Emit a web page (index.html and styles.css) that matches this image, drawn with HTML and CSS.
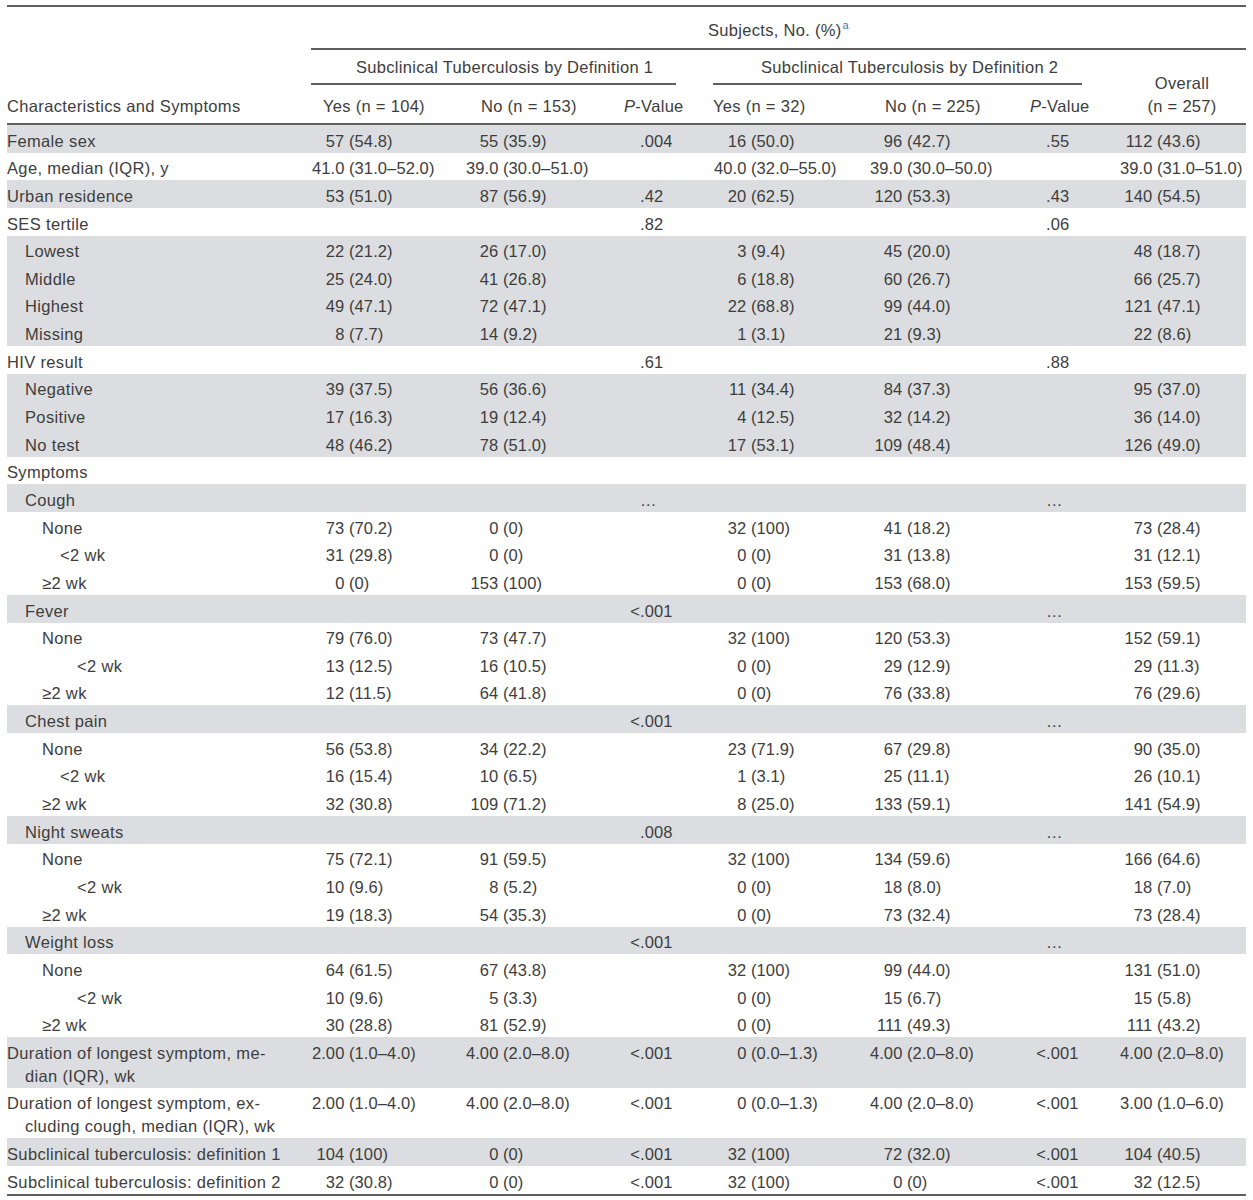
FILE: index.html
```html
<!DOCTYPE html>
<html lang="en">
<head>
<meta charset="utf-8">
<title>Table</title>
<link rel="stylesheet" href="styles.css">
</head>
<body>
<div class="wrap">
<table class="tbl">
<colgroup>
<col class="w0"><col class="w1"><col class="w2"><col class="w3"><col class="w4"><col class="w5"><col class="w6"><col class="w7">
</colgroup>
<thead>
<tr class="ha">
<td class="lab hlab" rowspan="3">Characteristics and Symptoms</td>
<td class="subj" colspan="7">Subjects, No. (%)<sup>a</sup></td>
</tr>
<tr class="hb">
<td class="def" colspan="3"><div class="def1">Subclinical Tuberculosis by Definition 1</div></td>
<td class="def" colspan="3"><div class="def2">Subclinical Tuberculosis by Definition 2</div></td>
<td class="ov" rowspan="2">Overall<br>(n = 257)</td>
</tr>
<tr class="hc">
<td class="h1">Yes (n = 104)</td>
<td class="h2">No (n = 153)</td>
<td class="h3"><i>P</i>-Value</td>
<td class="h4">Yes (n = 32)</td>
<td class="h5">No (n = 225)</td>
<td class="h6"><i>P</i>-Value</td>
</tr>
</thead>
<tbody>
<tr class="g"><td class="lab">Female sex</td><td class="c1"><span class="n">57</span>(54.8)</td><td class="c2"><span class="n">55</span>(35.9)</td><td class="c3"><span class="n"></span>.004</td><td class="c4"><span class="n">16</span>(50.0)</td><td class="c5"><span class="n">96</span>(42.7)</td><td class="c6"><span class="n"></span>.55</td><td class="c7"><span class="n">112</span>(43.6)</td></tr>
<tr><td class="lab">Age, median (IQR), y</td><td class="c1"><span class="n">41.0</span>(31.0–52.0)</td><td class="c2"><span class="n">39.0</span>(30.0–51.0)</td><td class="c3"></td><td class="c4"><span class="n">40.0</span>(32.0–55.0)</td><td class="c5"><span class="n">39.0</span>(30.0–50.0)</td><td class="c6"></td><td class="c7"><span class="n">39.0</span>(31.0–51.0)</td></tr>
<tr class="g"><td class="lab">Urban residence</td><td class="c1"><span class="n">53</span>(51.0)</td><td class="c2"><span class="n">87</span>(56.9)</td><td class="c3"><span class="n"></span>.42</td><td class="c4"><span class="n">20</span>(62.5)</td><td class="c5"><span class="n">120</span>(53.3)</td><td class="c6"><span class="n"></span>.43</td><td class="c7"><span class="n">140</span>(54.5)</td></tr>
<tr><td class="lab">SES tertile</td><td class="c1"></td><td class="c2"></td><td class="c3"><span class="n"></span>.82</td><td class="c4"></td><td class="c5"></td><td class="c6"><span class="n"></span>.06</td><td class="c7"></td></tr>
<tr class="g"><td class="lab l1">Lowest</td><td class="c1"><span class="n">22</span>(21.2)</td><td class="c2"><span class="n">26</span>(17.0)</td><td class="c3"></td><td class="c4"><span class="n">3</span>(9.4)</td><td class="c5"><span class="n">45</span>(20.0)</td><td class="c6"></td><td class="c7"><span class="n">48</span>(18.7)</td></tr>
<tr class="g"><td class="lab l1">Middle</td><td class="c1"><span class="n">25</span>(24.0)</td><td class="c2"><span class="n">41</span>(26.8)</td><td class="c3"></td><td class="c4"><span class="n">6</span>(18.8)</td><td class="c5"><span class="n">60</span>(26.7)</td><td class="c6"></td><td class="c7"><span class="n">66</span>(25.7)</td></tr>
<tr class="g"><td class="lab l1">Highest</td><td class="c1"><span class="n">49</span>(47.1)</td><td class="c2"><span class="n">72</span>(47.1)</td><td class="c3"></td><td class="c4"><span class="n">22</span>(68.8)</td><td class="c5"><span class="n">99</span>(44.0)</td><td class="c6"></td><td class="c7"><span class="n">121</span>(47.1)</td></tr>
<tr class="g"><td class="lab l1">Missing</td><td class="c1"><span class="n">8</span>(7.7)</td><td class="c2"><span class="n">14</span>(9.2)</td><td class="c3"></td><td class="c4"><span class="n">1</span>(3.1)</td><td class="c5"><span class="n">21</span>(9.3)</td><td class="c6"></td><td class="c7"><span class="n">22</span>(8.6)</td></tr>
<tr><td class="lab">HIV result</td><td class="c1"></td><td class="c2"></td><td class="c3"><span class="n"></span>.61</td><td class="c4"></td><td class="c5"></td><td class="c6"><span class="n"></span>.88</td><td class="c7"></td></tr>
<tr class="g"><td class="lab l1">Negative</td><td class="c1"><span class="n">39</span>(37.5)</td><td class="c2"><span class="n">56</span>(36.6)</td><td class="c3"></td><td class="c4"><span class="n">11</span>(34.4)</td><td class="c5"><span class="n">84</span>(37.3)</td><td class="c6"></td><td class="c7"><span class="n">95</span>(37.0)</td></tr>
<tr class="g"><td class="lab l1">Positive</td><td class="c1"><span class="n">17</span>(16.3)</td><td class="c2"><span class="n">19</span>(12.4)</td><td class="c3"></td><td class="c4"><span class="n">4</span>(12.5)</td><td class="c5"><span class="n">32</span>(14.2)</td><td class="c6"></td><td class="c7"><span class="n">36</span>(14.0)</td></tr>
<tr class="g"><td class="lab l1">No test</td><td class="c1"><span class="n">48</span>(46.2)</td><td class="c2"><span class="n">78</span>(51.0)</td><td class="c3"></td><td class="c4"><span class="n">17</span>(53.1)</td><td class="c5"><span class="n">109</span>(48.4)</td><td class="c6"></td><td class="c7"><span class="n">126</span>(49.0)</td></tr>
<tr><td class="lab">Symptoms</td><td class="c1"></td><td class="c2"></td><td class="c3"></td><td class="c4"></td><td class="c5"></td><td class="c6"></td><td class="c7"></td></tr>
<tr class="g"><td class="lab l1">Cough</td><td class="c1"></td><td class="c2"></td><td class="c3"><span class="n"></span>…</td><td class="c4"></td><td class="c5"></td><td class="c6"><span class="n"></span>…</td><td class="c7"></td></tr>
<tr><td class="lab l2">None</td><td class="c1"><span class="n">73</span>(70.2)</td><td class="c2"><span class="n">0</span>(0)</td><td class="c3"></td><td class="c4"><span class="n">32</span>(100)</td><td class="c5"><span class="n">41</span>(18.2)</td><td class="c6"></td><td class="c7"><span class="n">73</span>(28.4)</td></tr>
<tr><td class="lab l3">&lt;2 wk</td><td class="c1"><span class="n">31</span>(29.8)</td><td class="c2"><span class="n">0</span>(0)</td><td class="c3"></td><td class="c4"><span class="n">0</span>(0)</td><td class="c5"><span class="n">31</span>(13.8)</td><td class="c6"></td><td class="c7"><span class="n">31</span>(12.1)</td></tr>
<tr><td class="lab l2">≥2 wk</td><td class="c1"><span class="n">0</span>(0)</td><td class="c2"><span class="n">153</span>(100)</td><td class="c3"></td><td class="c4"><span class="n">0</span>(0)</td><td class="c5"><span class="n">153</span>(68.0)</td><td class="c6"></td><td class="c7"><span class="n">153</span>(59.5)</td></tr>
<tr class="g"><td class="lab l1">Fever</td><td class="c1"></td><td class="c2"></td><td class="c3"><span class="n">&lt;</span>.001</td><td class="c4"></td><td class="c5"></td><td class="c6"><span class="n"></span>…</td><td class="c7"></td></tr>
<tr><td class="lab l2">None</td><td class="c1"><span class="n">79</span>(76.0)</td><td class="c2"><span class="n">73</span>(47.7)</td><td class="c3"></td><td class="c4"><span class="n">32</span>(100)</td><td class="c5"><span class="n">120</span>(53.3)</td><td class="c6"></td><td class="c7"><span class="n">152</span>(59.1)</td></tr>
<tr><td class="lab l4">&lt;2 wk</td><td class="c1"><span class="n">13</span>(12.5)</td><td class="c2"><span class="n">16</span>(10.5)</td><td class="c3"></td><td class="c4"><span class="n">0</span>(0)</td><td class="c5"><span class="n">29</span>(12.9)</td><td class="c6"></td><td class="c7"><span class="n">29</span>(11.3)</td></tr>
<tr><td class="lab l2">≥2 wk</td><td class="c1"><span class="n">12</span>(11.5)</td><td class="c2"><span class="n">64</span>(41.8)</td><td class="c3"></td><td class="c4"><span class="n">0</span>(0)</td><td class="c5"><span class="n">76</span>(33.8)</td><td class="c6"></td><td class="c7"><span class="n">76</span>(29.6)</td></tr>
<tr class="g"><td class="lab l1">Chest pain</td><td class="c1"></td><td class="c2"></td><td class="c3"><span class="n">&lt;</span>.001</td><td class="c4"></td><td class="c5"></td><td class="c6"><span class="n"></span>…</td><td class="c7"></td></tr>
<tr><td class="lab l2">None</td><td class="c1"><span class="n">56</span>(53.8)</td><td class="c2"><span class="n">34</span>(22.2)</td><td class="c3"></td><td class="c4"><span class="n">23</span>(71.9)</td><td class="c5"><span class="n">67</span>(29.8)</td><td class="c6"></td><td class="c7"><span class="n">90</span>(35.0)</td></tr>
<tr><td class="lab l3">&lt;2 wk</td><td class="c1"><span class="n">16</span>(15.4)</td><td class="c2"><span class="n">10</span>(6.5)</td><td class="c3"></td><td class="c4"><span class="n">1</span>(3.1)</td><td class="c5"><span class="n">25</span>(11.1)</td><td class="c6"></td><td class="c7"><span class="n">26</span>(10.1)</td></tr>
<tr><td class="lab l2">≥2 wk</td><td class="c1"><span class="n">32</span>(30.8)</td><td class="c2"><span class="n">109</span>(71.2)</td><td class="c3"></td><td class="c4"><span class="n">8</span>(25.0)</td><td class="c5"><span class="n">133</span>(59.1)</td><td class="c6"></td><td class="c7"><span class="n">141</span>(54.9)</td></tr>
<tr class="g"><td class="lab l1">Night sweats</td><td class="c1"></td><td class="c2"></td><td class="c3"><span class="n"></span>.008</td><td class="c4"></td><td class="c5"></td><td class="c6"><span class="n"></span>…</td><td class="c7"></td></tr>
<tr><td class="lab l2">None</td><td class="c1"><span class="n">75</span>(72.1)</td><td class="c2"><span class="n">91</span>(59.5)</td><td class="c3"></td><td class="c4"><span class="n">32</span>(100)</td><td class="c5"><span class="n">134</span>(59.6)</td><td class="c6"></td><td class="c7"><span class="n">166</span>(64.6)</td></tr>
<tr><td class="lab l4">&lt;2 wk</td><td class="c1"><span class="n">10</span>(9.6)</td><td class="c2"><span class="n">8</span>(5.2)</td><td class="c3"></td><td class="c4"><span class="n">0</span>(0)</td><td class="c5"><span class="n">18</span>(8.0)</td><td class="c6"></td><td class="c7"><span class="n">18</span>(7.0)</td></tr>
<tr><td class="lab l2">≥2 wk</td><td class="c1"><span class="n">19</span>(18.3)</td><td class="c2"><span class="n">54</span>(35.3)</td><td class="c3"></td><td class="c4"><span class="n">0</span>(0)</td><td class="c5"><span class="n">73</span>(32.4)</td><td class="c6"></td><td class="c7"><span class="n">73</span>(28.4)</td></tr>
<tr class="g"><td class="lab l1">Weight loss</td><td class="c1"></td><td class="c2"></td><td class="c3"><span class="n">&lt;</span>.001</td><td class="c4"></td><td class="c5"></td><td class="c6"><span class="n"></span>…</td><td class="c7"></td></tr>
<tr><td class="lab l2">None</td><td class="c1"><span class="n">64</span>(61.5)</td><td class="c2"><span class="n">67</span>(43.8)</td><td class="c3"></td><td class="c4"><span class="n">32</span>(100)</td><td class="c5"><span class="n">99</span>(44.0)</td><td class="c6"></td><td class="c7"><span class="n">131</span>(51.0)</td></tr>
<tr><td class="lab l4">&lt;2 wk</td><td class="c1"><span class="n">10</span>(9.6)</td><td class="c2"><span class="n">5</span>(3.3)</td><td class="c3"></td><td class="c4"><span class="n">0</span>(0)</td><td class="c5"><span class="n">15</span>(6.7)</td><td class="c6"></td><td class="c7"><span class="n">15</span>(5.8)</td></tr>
<tr><td class="lab l2">≥2 wk</td><td class="c1"><span class="n">30</span>(28.8)</td><td class="c2"><span class="n">81</span>(52.9)</td><td class="c3"></td><td class="c4"><span class="n">0</span>(0)</td><td class="c5"><span class="n">111</span>(49.3)</td><td class="c6"></td><td class="c7"><span class="n">111</span>(43.2)</td></tr>
<tr class="g"><td class="lab hang">Duration of longest symptom, me-<br>dian (IQR), wk</td><td class="c1"><span class="n">2.00</span>(1.0–4.0)</td><td class="c2"><span class="n">4.00</span>(2.0–8.0)</td><td class="c3"><span class="n">&lt;</span>.001</td><td class="c4"><span class="n">0</span>(0.0–1.3)</td><td class="c5"><span class="n">4.00</span>(2.0–8.0)</td><td class="c6"><span class="n">&lt;</span>.001</td><td class="c7"><span class="n">4.00</span>(2.0–8.0)</td></tr>
<tr><td class="lab hang">Duration of longest symptom, ex-<br>cluding cough, median (IQR), wk</td><td class="c1"><span class="n">2.00</span>(1.0–4.0)</td><td class="c2"><span class="n">4.00</span>(2.0–8.0)</td><td class="c3"><span class="n">&lt;</span>.001</td><td class="c4"><span class="n">0</span>(0.0–1.3)</td><td class="c5"><span class="n">4.00</span>(2.0–8.0)</td><td class="c6"><span class="n">&lt;</span>.001</td><td class="c7"><span class="n">3.00</span>(1.0–6.0)</td></tr>
<tr class="g"><td class="lab">Subclinical tuberculosis: definition 1</td><td class="c1"><span class="n">104</span>(100)</td><td class="c2"><span class="n">0</span>(0)</td><td class="c3"><span class="n">&lt;</span>.001</td><td class="c4"><span class="n">32</span>(100)</td><td class="c5"><span class="n">72</span>(32.0)</td><td class="c6"><span class="n">&lt;</span>.001</td><td class="c7"><span class="n">104</span>(40.5)</td></tr>
<tr><td class="lab">Subclinical tuberculosis: definition 2</td><td class="c1"><span class="n">32</span>(30.8)</td><td class="c2"><span class="n">0</span>(0)</td><td class="c3"><span class="n">&lt;</span>.001</td><td class="c4"><span class="n">32</span>(100)</td><td class="c5"><span class="n">0</span>(0)</td><td class="c6"><span class="n">&lt;</span>.001</td><td class="c7"><span class="n">32</span>(12.5)</td></tr>
</tbody>
</table>
</div>
</body>
</html>
```
FILE: styles.css
```css
html, body {
  margin: 0;
  padding: 0;
  background: #ffffff;
}
body {
  font-family: "Liberation Sans", Arial, sans-serif;
  font-size: 16.5px;
  color: #3d3d3d;
}
.wrap {
  padding: 5px 7px 0 7px;
}
.tbl {
  width: 1239px;
  table-layout: fixed;
  border-collapse: separate;
  border-spacing: 0;
  border-top: 2px solid #5f5f5f;
  border-bottom: 2px solid #5f5f5f;
}
.w0 { width: 304px; }
.w1 { width: 144px; }
.w2 { width: 155px; }
.w3 { width: 80px; }
.w4 { width: 165px; }
.w5 { width: 160px; }
.w6 { width: 80px; }
.w7 { width: 151px; }

.tbl td {
  padding: 0;
  line-height: 23px;
  white-space: nowrap;
  letter-spacing: 0.1px;
}
.tbl td.lab {
  letter-spacing: 0.35px;
}
.tbl thead td {
  vertical-align: bottom;
  letter-spacing: 0.3px;
}
.ha td.subj {
  height: 35px;
  padding-bottom: 6px;
  padding-left: 397px;
  border-bottom: 2px solid #5f5f5f;
}
.subj sup {
  color: #2f7cc8;
  font-size: 11px;
  line-height: 0;
  vertical-align: 7px;
  margin-left: 1px;
  letter-spacing: 0;
}
.hb td.def {
  height: 35px;
}
.def1, .def2 {
  padding-bottom: 4px;
  border-bottom: 2px solid #5f5f5f;
}
.def1 {
  margin-right: 14px;
  padding-left: 45px;
}
.def2 {
  margin-left: 23px;
  margin-right: 13px;
  padding-left: 48px;
}
.hc td {
  height: 32.5px;
  padding-bottom: 5.5px;
  border-bottom: 2px solid #5f5f5f;
}
.tbl td.hlab,
.tbl td.ov {
  padding-bottom: 5.5px;
  border-bottom: 2px solid #5f5f5f;
}
.tbl td.ov {
  text-align: center;
  padding-left: 23px;
}
.h1 { padding-left: 12px !important; }
.h2 { padding-left: 26px !important; }
.h3 { padding-left: 14px !important; }
.h4 { padding-left: 23px !important; }
.h5 { padding-left: 30px !important; }
.h6 { padding-left: 15px !important; }

.tbl tbody td {
  vertical-align: top;
  padding-top: 4.65px;
}
.tbl tbody tr.g td {
  background: #dcdde0;
}
.l1 { padding-left: 18px !important; }
.l2 { padding-left: 35px !important; }
.l3 { padding-left: 53px !important; }
.l4 { padding-left: 70px !important; }
.tbl td.hang {
  padding-left: 18px;
  text-indent: -18px;
}

.n {
  display: inline-block;
  box-sizing: border-box;
  text-align: right;
  padding-right: 4.6px;
}
.c3 .n, .c6 .n {
  padding-right: 0;
}
.c1 .n { width: 38px; }
.c2 .n { width: 48px; }
.c3 .n { width: 30px; }
.c4 .n { width: 61px; }
.c5 .n { width: 52px; }
.c6 .n { width: 31px; }
.c7 .n { width: 62px; }
```
